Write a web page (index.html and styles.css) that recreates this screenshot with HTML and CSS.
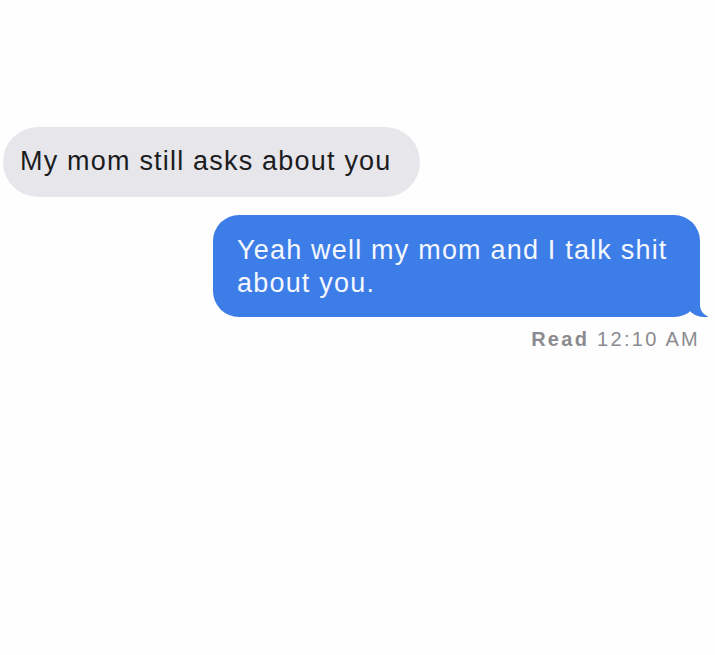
FILE: index.html
```html
<!DOCTYPE html>
<html lang="en">

<head>
    <meta charset="UTF-8">
    <meta name="viewport" content="width=device-width, initial-scale=1.0">
    <title>Messages</title>
    <link rel="stylesheet" href="styles.css">
</head>

<body>
    <div class="thread">
        <div class="bubble received">My mom still asks about you</div>

        <div class="bubble sent">Yeah well my mom and I talk shit about you.</div>

        <div class="receipt"><span class="receipt-label">Read</span> 12:10 AM</div>
    </div>
</body>

</html>
```
FILE: styles.css
```css
body {
    margin: 0;
    background-color: #fefefe;
    font-family: 'Liberation Sans', Arial, sans-serif;
}

.thread {
    display: flex;
    flex-direction: column;
    padding: 127px 15px 0 3px;
}

.bubble {
    box-sizing: border-box;
    font-size: 27px;
    line-height: 33px;
    letter-spacing: 1.2px;
}

.received {
    align-self: flex-start;
    width: 417px;
    height: 70px;
    padding: 18px 0 0 17px;
    background-color: #e6e6eb;
    color: #1c1c1e;
    border-radius: 35px;
}

.sent {
    position: relative;
    align-self: flex-end;
    width: 487px;
    margin-top: 18px;
    padding: 19px 14px 17px 24px;
    background-color: #3d7de8;
    color: #f4f7fd;
    border-radius: 26px;
}

/* tail */
.sent::before,
.sent::after {
    content: "";
    position: absolute;
    bottom: 0;
    height: 26px;
}

.sent::before {
    right: -8px;
    width: 22px;
    background-color: #3d7de8;
    border-bottom-left-radius: 18px 16px;
}

.sent::after {
    right: -26px;
    width: 26px;
    background-color: #fefefe;
    border-bottom-left-radius: 12px;
}

.receipt {
    align-self: flex-end;
    margin-top: 11px;
    margin-right: 0;
    font-size: 20px;
    letter-spacing: 2.3px;
    color: #8b8b8f;
}

.receipt-label {
    font-weight: bold;
}
```
